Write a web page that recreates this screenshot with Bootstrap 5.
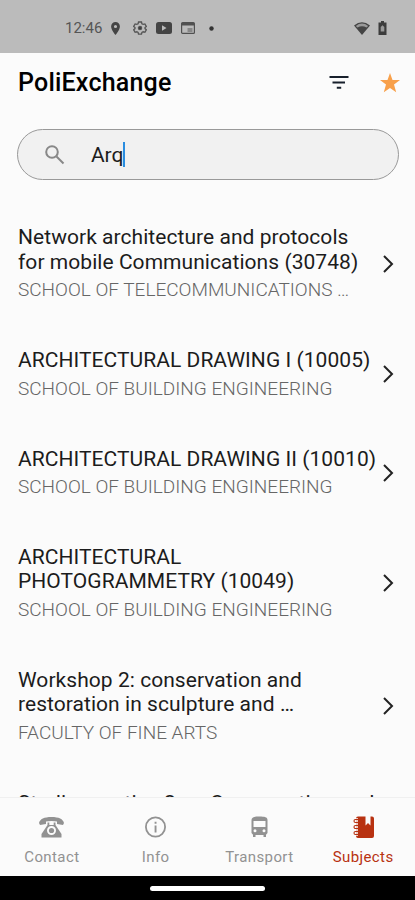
<!DOCTYPE html>
<html lang="en">
<head>
<meta charset="utf-8">
<meta name="viewport" content="width=device-width, initial-scale=1">
<title>PoliExchange</title>
<link href="https://cdn.jsdelivr.net/npm/bootstrap@5.3.0/dist/css/bootstrap.min.css" rel="stylesheet">
<style>
body{font-family:Roboto,sans-serif;background:#fbfbfb;color:#1c1c1c;height:900px}
svg{display:block;flex:none}
.statusbar{height:53px;background:#bbb;color:#444;padding:3px 28px 0 65px}
.clock{font-size:15px;letter-spacing:0;color:#555;width:46px}
.notices{gap:9px}
.notices svg:nth-child(2){margin-left:4px}
.notices svg:nth-child(5){margin-left:5px}
.appbar{height:60px;padding:0 15px 0 18px}
.brand{font-size:25px;font-weight:500;color:#000;line-height:30px;letter-spacing:.2px}
.actions{gap:31px}
.search{margin:16px 16px 0 17px;height:51px;border:1px solid #999;background:#f1f1f1;padding-left:27px}
.query{font-size:21px;line-height:25px;margin-left:26px;padding-top:1px;letter-spacing:-.1px}
.caret{width:2px;height:25px;background:#2a8de0}
.subjects{padding-top:22px;min-height:0}
.subject{padding:1px 20px 0 18px;height:98.4px;color:#1c1c1c}
.subject.tall{height:122.8px}
.words{width:0}
.title{font-size:21px;line-height:24.4px;letter-spacing:.05px;white-space:nowrap}
.school{font-size:19px;font-weight:300;line-height:24px;margin-top:4px;color:#666;white-space:nowrap}
.tabs{height:79px;border-top:1px solid #f0f0f0;background:#fbfbfb;padding-top:18px}
.tab{color:#929292;font-size:15px;line-height:18px;letter-spacing:.4px}
.tab span{margin-top:9px}
.tab.active{color:#b83211}
.gesture{height:24px;background:#000}
.pill{width:115px;height:5px;background:#fff}
</style>
<script src="https://cdn.jsdelivr.net/npm/bootstrap@5.3.0/dist/js/bootstrap.bundle.min.js"></script>
</head>
<body class="d-flex flex-column overflow-hidden">
<div class="statusbar d-flex align-items-center flex-shrink-0">
  <span class="clock">12:46</span>
  <div class="notices d-flex align-items-center">
    <svg width="9" height="13" viewBox="0 0 9 13" fill="#444"><path fill-rule="evenodd" d="M4.500 0A4.400 4.400 0 0 0 .1 4.400C.1 7.600 4.500 13 4.500 13s4.400-5.400 4.400-8.600A4.400 4.400 0 0 0 4.500 0zm0 2.900a1.600 1.600 0 1 1 0 3.200 1.600 1.600 0 0 1 0-3.200z"/></svg>
    <svg width="14" height="14" viewBox="0 0 14 14" fill="none" stroke="#555" stroke-width="1.300"><path d="M5.500 1h3l.4 1.700 1.300.7 1.700-.5 1.400 2.500L12 6.600v1l1.300 1.200-1.400 2.500-1.700-.5-1.300.7-.4 1.600h-3l-.4-1.600-1.300-.7-1.700.5L.7 8.800 2 7.600v-1L.7 5.400l1.400-2.500 1.700.5 1.300-.7z"/><circle cx="7" cy="7.100" r="1.600" fill="#333"/></svg>
    <svg width="16" height="12" viewBox="0 0 16 12"><rect width="16" height="12" rx="2.500" fill="#444"/><path d="M6 3.300v5.400L10.500 6z" fill="#bbb"/></svg>
    <svg width="14" height="12" viewBox="0 0 14 12"><rect x=".6" y=".6" width="12.800" height="10.800" rx="1" fill="none" stroke="#505050" stroke-width="1.200"/><path d="M1 1h12v2.500H1z" fill="#505050"/><path d="M6.500 6h5v4h-5z" fill="#888"/></svg>
    <svg width="5" height="5" viewBox="0 0 5 5"><circle cx="2.500" cy="2.500" r="2.200" fill="#333"/></svg>
  </div>
  <div class="d-flex align-items-center gap-2 ms-auto">
    <svg width="16" height="13" viewBox="0 0 16 13"><path d="M0 3.500Q8-2.800 16 3.500L8 13z" fill="#444"/><path d="M1.800 3.900Q8-.9 14.200 3.900L12.500 5.500Q8 3 3.500 5.500z" fill="#999"/></svg>
    <svg width="9" height="14" viewBox="0 0 9 14"><path d="M3 0h3v1.500h2.500V14h-8V1.500H3z" fill="#3c3c3c"/><path d="M4.500 4.200L6.300 6v4.500H2.700V6z" fill="#999"/></svg>
  </div>
</div>
<header class="appbar d-flex align-items-center flex-shrink-0">
  <h1 class="brand mb-0 me-auto">PoliExchange</h1>
  <div class="actions d-flex align-items-center">
    <svg width="20" height="14" viewBox="0 0 20 14" fill="none" stroke="#18202c" stroke-width="2"><path d="M.5 1h19M3.500 6.500h12.500M7.800 11.800h4.400"/></svg>
    <svg width="20" height="20" viewBox="0 0 20 20"><path d="M10 0l2.500 7H20l-6 4.600 2.200 7.700L10 14.900l-6.200 4.400L6 11.600 0 7h7.500z" fill="#f8a04a"/></svg>
  </div>
</header>
<div class="search rounded-pill d-flex align-items-center flex-shrink-0">
  <svg width="20" height="20" viewBox="0 0 20 20" fill="none" stroke="#888" stroke-width="2"><circle cx="7" cy="7" r="5.800"/><path d="M11.500 11.500l7 7"/></svg>
  <span class="query">Arq</span><span class="caret"></span>
</div>
<main class="subjects flex-grow-1 overflow-hidden">
  <div class="subject tall d-flex align-items-center"><div class="words flex-grow-1"><div class="title">Network architecture and protocols<br>for mobile Communications (30748)</div><div class="school">SCHOOL OF TELECOMMUNICATIONS …</div></div><svg width="15" height="20" viewBox="0 0 15 20" fill="none" stroke="#222" stroke-width="2"><path d="M4 2l8 8-8 8"/></svg></div>
</main>
<nav class="tabs d-flex flex-shrink-0"></nav>
<div class="gesture d-flex align-items-center justify-content-center flex-shrink-0"><div class="pill rounded-pill"></div></div>
<script>
const subjects = [
  ["ARCHITECTURAL DRAWING I (10005)", "SCHOOL OF BUILDING ENGINEERING"],
  ["ARCHITECTURAL DRAWING II (10010)", "SCHOOL OF BUILDING ENGINEERING"],
  ["ARCHITECTURAL<br>PHOTOGRAMMETRY (10049)", "SCHOOL OF BUILDING ENGINEERING"],
  ["Workshop 2: conservation and<br>restoration in sculpture and …", "FACULTY OF FINE ARTS"],
  ["Studio practice 2 on Conservation and<br>Restoration", "FACULTY OF FINE ARTS"]
];
const list = document.querySelector(".subjects");
const first = list.firstElementChild;
for (const [title, school] of subjects) {
  const row = first.cloneNode(true);
  row.classList.toggle("tall", title.includes("<br>"));
  row.querySelector(".title").innerHTML = title;
  row.querySelector(".school").textContent = school;
  list.append(row);
}
const tabs = [
  ["Contact", '<path fill-rule="evenodd" d="M0 7C1 3 5 1 12.500 1S24 3 25 7l-1 2-6-1V5.500C15 4.700 10 4.700 7 5.500V8L1 9zM8.500 6.500h1.800V9h4.400V6.500h1.800V9l6 9v3.500h-20V18l6-9zM12.500 10a4.500 4.500 0 1 0 0 9 4.500 4.500 0 0 0 0-9z"/><circle cx="12.500" cy="14.500" r="2.600"/>'],
  ["Info", '<circle cx="12.500" cy="11" r="9.600" fill="none" stroke="currentColor" stroke-width="1.800"/><path d="M11.600 5.800h1.900v2h-1.900zM11.600 9.500h1.900V16.500h-1.900z"/>'],
  ["Transport", '<path fill-rule="evenodd" d="M4.500 4c0-3 3-3.500 8-3.500s8 .500 8 3.500v13l-1.500 1.700V21h-2.500v-2h-8v2H6v-2.300L4.500 17zM6.500 5v6h12V5zM8 13.300a1.500 1.500 0 1 0 0 3 1.500 1.500 0 0 0 0-3zm9 0a1.500 1.500 0 1 0 0 3 1.500 1.500 0 0 0 0-3z"/>'],
  ["Subjects", '<path d="M7 .5h7.500v9l2.500-2.500 2.500 2.500v-9H21q2 0 2 2V20q0 2-2 2H7q-2 0-2-2V2.500q0-2 2-2z"/><path d="M7 3.500H4.500a1.500 1.500 0 0 0 0 3H7M7 9.500H4.500a1.500 1.500 0 0 0 0 3H7M7 15.500H4.500a1.500 1.500 0 0 0 0 3H7" fill="none" stroke="#fbfbfb" stroke-width="2.500"/><path d="M7 3.500H4.500a1.500 1.500 0 0 0 0 3H7M7 9.500H4.500a1.500 1.500 0 0 0 0 3H7M7 15.500H4.500a1.500 1.500 0 0 0 0 3H7" fill="none" stroke="currentColor" stroke-width="1.100"/>']
];
document.querySelector(".tabs").innerHTML = tabs.map(([name, icon], i) =>
  `<div class="tab col-3 d-flex flex-column align-items-center${i === 3 ? " active" : ""}"><svg width="25" height="23" viewBox="0 0 25 23" fill="currentColor">${icon}</svg><span>${name}</span></div>`).join("");
</script>
</body>
</html>
